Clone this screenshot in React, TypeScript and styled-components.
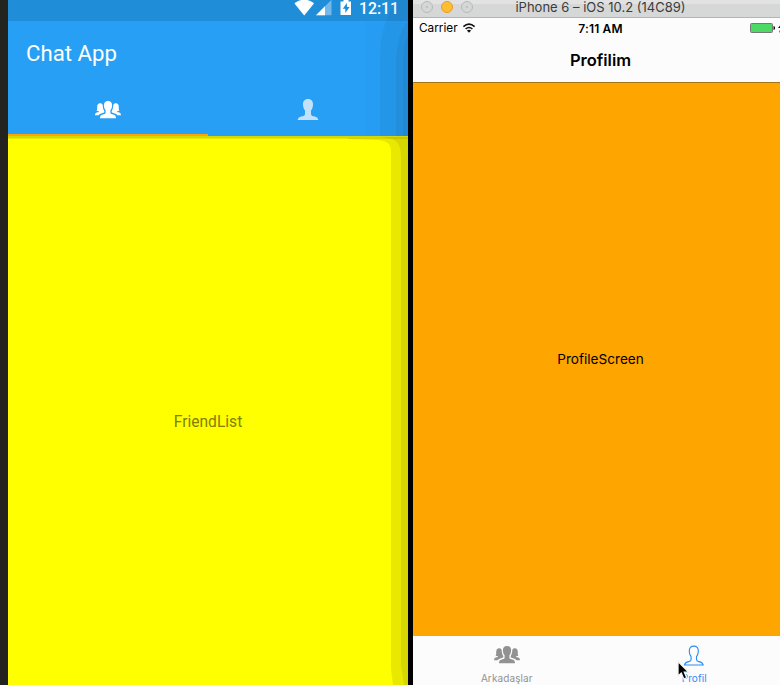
import React from "react";
import styled, { createGlobalStyle } from "styled-components";

const GlobalStyle = createGlobalStyle`
  * { box-sizing: border-box; }
  html, body { margin: 0; padding: 0; background: #000; overflow: hidden; }
`;

const Desktop = styled.main`
  display: grid;
  grid-template-columns: 400px 367px;
  column-gap: 5px;
  width: 780px;
  height: 685px;
  padding-left: 8px;
  background: linear-gradient(to right, #23241f 8px, #000 8px);
  overflow: hidden;
`;

const AndroidPhone = styled.section`
  position: relative;
  display: flex;
  flex-direction: column;
  min-width: 0;
  overflow: hidden;
  font-family: Roboto, sans-serif;
`;

const AndroidStatus = styled.header`
  display: flex;
  justify-content: flex-end;
  height: 21px;
  padding-right: 9px;
  background: #208dd9;
  color: #fff;
`;

const StatusIcons = styled.svg`
  width: 60px;
  height: 21px;
  margin-right: 5px;
`;

const AndroidClock = styled.time`
  font-size: 15.8px;
  font-weight: 500;
  line-height: 18px;
  width: 40px;
  white-space: nowrap;
`;

const AppBar = styled.div`
  height: 63px;
  padding: 18px 18px 0;
  background: #279ff5;
  color: #fff;
  font-size: 22.2px;
  line-height: 29px;
`;

const TopTabs = styled.nav`
  display: grid;
  grid-template-columns: 1fr 1fr;
  height: 52px;
  background: #279ff5;
`;

const TopTab = styled.div<{ $active?: boolean }>`
  display: flex;
  justify-content: center;
  padding-top: 12px;
  color: ${(p) => (p.$active ? "#fff" : "#c2e1fb")};
  border-bottom: 2px solid ${(p) => (p.$active ? "#ffa500" : "transparent")};
`;

const Scene = styled.div<{ $color: string }>`
  display: flex;
  flex: 1;
  align-items: center;
  justify-content: center;
  background: ${(p) => p.$color};
`;

const FriendScene = styled(Scene)`
  padding-top: 23px;
  box-shadow: inset 0 2px #d8d800, inset 0 3px #eaea00;
  color: #807f00;
  font-size: 15.6px;
`;

const EdgeShade = styled.svg`
  position: absolute;
  inset: 0;
  width: 400px;
  height: 685px;
  pointer-events: none;
`;

const Simulator = styled.section`
  position: relative;
  overflow: hidden;
  font-family: Inter, "Liberation Sans", sans-serif;
  color: #000;
`;

const Device = styled.div`
  display: flex;
  flex-direction: column;
  width: 375px;
  height: 685px;
`;

const WindowBar = styled.header`
  display: grid;
  grid-template-columns: 60px 1fr 60px;
  height: 18px;
  border-bottom: 1px solid #b4b4b4;
  background: linear-gradient(#e2e2e2 4px, #d6d8d7 4px);
`;

const WindowButtons = styled.svg`
  width: 62px;
  height: 17px;
`;

const WindowTitle = styled.div`
  font-size: 13px;
  line-height: 15px;
  text-align: center;
  white-space: nowrap;
  color: #3c3c3c;
`;

const IosStatus = styled.div`
  display: grid;
  grid-template-columns: 1fr auto 1fr;
  height: 20px;
  padding: 0 0 0 6px;
  background: #fcfcfc;
  font-size: 11.8px;
  line-height: 21px;
`;

const CarrierGroup = styled.div`
  display: flex;
  gap: 4px;
`;

const WifiIcon = styled.svg`
  width: 14px;
  height: 20px;
`;

const IosTime = styled.time`
  font-weight: 600;
  font-size: 12px;
  letter-spacing: 0.15px;
  margin-left: -6px;
`;

const BatteryIcon = styled.svg`
  justify-self: end;
  width: 38px;
  height: 20px;
`;

const NavBar = styled.div`
  height: 45px;
  border-bottom: 1px solid #a57419;
  background: #fcfcfc;
  font-size: 16.5px;
  font-weight: 600;
  line-height: 44px;
  text-align: center;
`;

const ProfileScene = styled(Scene)`
  padding-bottom: 2px;
  font-size: 13.6px;
`;

const BottomTabs = styled.nav`
  display: grid;
  grid-template-columns: 1fr 1fr;
  height: 49px;
  background: #fcfcfc;
`;

const BottomTab = styled.div<{ $active?: boolean }>`
  display: flex;
  flex-direction: column;
  align-items: center;
  padding-top: 5px;
  color: ${(p) => (p.$active ? "#2a8df5" : "#929292")};
  font-size: 10px;
  line-height: 14px;
  letter-spacing: 0.1px;
`;

const Glyph = styled.svg`
  display: block;
  width: 30px;
  height: 30px;
  flex: none;
  fill: currentColor;
`;

const Pointer = styled.svg`
  position: absolute;
  left: 262px;
  top: 659px;
  width: 16px;
  height: 24px;
`;

const personPath =
  "M15 4.5c3.2 0 5.1 2.1 5 5.3 0 1.3-.1 2.1-.4 3-.4 1.5-1 2.500-1.600 3.300v3.100c0 1.600.9 2.100 2.700 2.500 2.400.5 4 .9 4.700 3.700H4.600c.7-2.800 2.300-3.200 4.700-3.700 1.800-.4 2.700-.9 2.700-2.500v-3.100c-.6-.8-1.200-1.800-1.600-3.300-.3-.9-.4-1.700-.4-3-.1-3.200 1.800-5.300 5-5.300z";

function PeopleGlyph() {
  return (
    <Glyph viewBox="0 0 30 30" aria-hidden>
      <g transform="translate(0 -1.400) scale(1 1.070)">
        <path d="M15 6c2.700 0 4.200 1.600 4.100 4 0 1.200-.2 2.200-.6 3-.3.800-.8 1.300-1.100 1.700v2c0 1 .6 1.300 2 1.600 2.300.5 3.400.9 3.700 3.700H6.900c.3-2.800 1.400-3.200 3.700-3.700 1.400-.3 2-.6 2-1.600v-2c-.3-.4-.8-.9-1.100-1.700-.4-.8-.6-1.800-.6-3C10.800 7.600 12.300 6 15 6z" />
        <path d="M7.100 8.200c1.300 0 2.200.5 2.600 1.500.1 2.300.5 4.100 1.600 5.600v1.100c-.8.700-2.600.8-4.300 1.700-.6.300-1 .7-1.400 1.100H2c.2-1.900 1.100-2.300 2.700-2.600.9-.2 1.300-.4 1.200-1.100-.7 0-1.700 0-2.300-.3.700-.8.600-2.100.6-3.500 0-2.200 1-3.500 2.900-3.500z" />
        <path d="M22.900 8.200c-1.300 0-2.200.5-2.600 1.500-.1 2.300-.5 4.100-1.600 5.600v1.100c.8.700 2.600.8 4.300 1.700.6.300 1 .7 1.400 1.100H28c-.2-1.900-1.100-2.300-2.700-2.600-.9-.2-1.300-.4-1.200-1.100.7 0 1.700 0 2.300-.3-.7-.8-.6-2.100-.6-3.500 0-2.200-1-3.500-2.900-3.500z" />
      </g>
    </Glyph>
  );
}

function PersonGlyph({ outline }: { outline?: boolean }) {
  return (
    <Glyph viewBox="0 0 30 30" aria-hidden>
      {outline ? (
        <path
          d={personPath}
          fill="none"
          stroke="currentColor"
          strokeWidth="1.25"
          transform="translate(1.300 1.100) scale(.9)"
        />
      ) : (
        <path d={personPath} transform="translate(0 -1.500)" />
      )}
    </Glyph>
  );
}

export default function App() {
  return (
    <>
      <GlobalStyle />
      <Desktop>
        <AndroidPhone>
          <AndroidStatus>
            <StatusIcons viewBox="0 0 60 21">
              <path d="M.5 3.500C5.500-1.500 15-1.500 20 3.500L10.200 15.500z" fill="#fff" />
              <path d="M22 15.200L37.500-.2v15.400z" fill="#72b8ea" />
              <path d="M22 15.200l9-9v9z" fill="#fff" />
              <path d="M49.500 0h5v1.500H57V15H46.500V1.500h3z" fill="#fff" />
              <path d="M52.800 3l-4 5.700h2.500v4.400l4.300-6H53z" fill="#208dd9" />
            </StatusIcons>
            <AndroidClock>12:11</AndroidClock>
          </AndroidStatus>
          <AppBar>Chat App</AppBar>
          <TopTabs>
            <TopTab $active>
              <PeopleGlyph />
            </TopTab>
            <TopTab>
              <PersonGlyph />
            </TopTab>
          </TopTabs>
          <FriendScene $color="#ffff00">FriendList</FriendScene>
          <EdgeShade viewBox="0 0 400 685" aria-hidden>
            <path d="M357 21H400V136H357z" fill="#000" opacity=".012" />
            <path d="M372 136V55Q372 34 380 16L388 0H400V136z" fill="#000" opacity=".04" />
            <path d="M388 136V60Q389 34 400 21V136z" fill="#000" opacity=".05" />
            <path d="M395 136V55Q396 43 400 34V136z" fill="#000" opacity=".03" />
            <path d="M340 138H400V685H385L383 669V151Q383 141 370 140L340 139z" fill="#000" opacity=".09" />
            <path d="M372 137H400V685H396L393 665V157Q393 142 384 139z" fill="#000" opacity=".075" />
          </EdgeShade>
        </AndroidPhone>

        <Simulator>
          <Device>
            <WindowBar>
              <WindowButtons viewBox="0 0 62 17">
                <g fill="#d5d7d6" stroke="#b9bbba">
                  <circle cx="14" cy="7" r="5.500" />
                  <circle cx="54" cy="7" r="5.500" />
                </g>
                <circle cx="34" cy="7" r="5.500" fill="#ffbd2f" stroke="#e2a12c" />
                <circle cx="14" cy="7" r="1" fill="#b9bbba" />
                <circle cx="54" cy="7" r="1" fill="#b9bbba" />
              </WindowButtons>
              <WindowTitle>iPhone 6 – iOS 10.2 (14C89)</WindowTitle>
            </WindowBar>
            <IosStatus>
              <CarrierGroup>
                Carrier
                <WifiIcon viewBox="0 0 14 20">
                  <g fill="none" stroke="#111" strokeWidth="1.600">
                    <path d="M1.400 8.600Q7 3.500 12.600 8.600" />
                    <path d="M3.600 11Q7 8 10.400 11" />
                  </g>
                  <path d="M4.900 12.500Q7 10.900 9.100 12.500L7 14.700z" fill="#111" />
                </WifiIcon>
              </CarrierGroup>
              <IosTime>7:11 AM</IosTime>
              <BatteryIcon viewBox="0 0 38 20">
                <rect x=".5" y="5.500" width="22" height="9" rx="1" fill="#4cd964" stroke="#777" />
                <path d="M24 8.500q1.500 1.500 0 3z" fill="#111" stroke="#111" />
                <path d="M32 5l-4 5h2.500l-1.500 5 5-6h-3z" fill="#111" />
              </BatteryIcon>
            </IosStatus>
            <NavBar>Profilim</NavBar>
            <ProfileScene $color="#ffa500">ProfileScreen</ProfileScene>
            <BottomTabs>
              <BottomTab>
                <PeopleGlyph />
                Arkadaşlar
              </BottomTab>
              <BottomTab $active>
                <PersonGlyph outline />
                Profil
              </BottomTab>
            </BottomTabs>
          </Device>
          <Pointer viewBox="0 0 16 24" aria-hidden>
            <path
              d="M3 2.500V17l3.300-3 2.500 6 3-1.300-2.500-5.500h4.500z"
              fill="#000"
              stroke="#f4f4f4"
              strokeWidth="1.300"
            />
          </Pointer>
        </Simulator>
      </Desktop>
    </>
  );
}
